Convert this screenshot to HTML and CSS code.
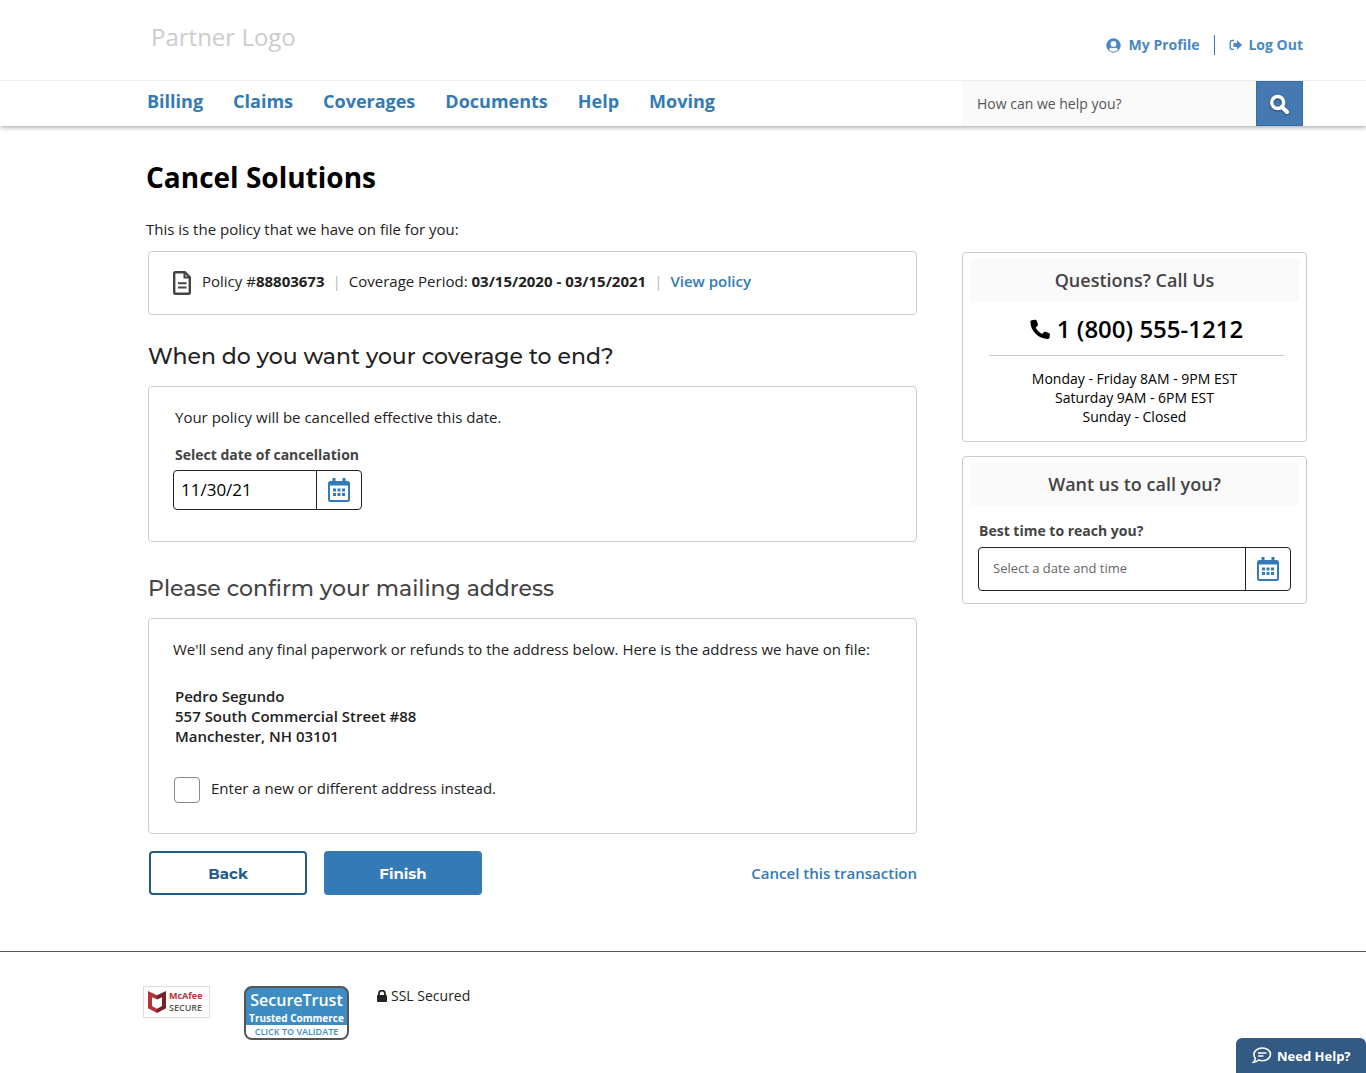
FILE: index.html
```html
<!DOCTYPE html>
<html lang="en">
<head>
    <meta charset="UTF-8">
    <meta name="viewport" content="width=device-width, initial-scale=1.0">
    <title>Cancel Solutions</title>
    <link rel="stylesheet" href="styles.css">
</head>
<body>
    <!-- Calendar icon shared by both date fields -->
    <svg class="sprite" width="0" height="0" aria-hidden="true">
        <symbol id="calendar" viewBox="0 0 22 24">
            <path fill-rule="evenodd" d="M4.500 0h3v3h7V0h3v3h2a2.500 2.500 0 0 1 2.500 2.500v16a2.500 2.500 0 0 1-2.500 2.500h-17A2.500 2.500 0 0 1 0 21.500v-16A2.500 2.500 0 0 1 2.500 3h2zM2 7.500v14.500h18V7.500z"/>
            <path d="M5 10.500h3v3H5zM9.500 10.500h3v3h-3zM14 10.500h3v3h-3zM5 15h3v3H5zM9.500 15h3v3h-3zM14 15h3v3h-3z"/>
        </symbol>
    </svg>

    <header class="header">
        <div class="topbar">
            <div class="logo">Partner Logo</div>
            <div class="account">
                <a href="#" class="profile">
                    <svg width="15" height="15" viewBox="0 0 15 15" aria-hidden="true">
                        <circle cx="7.500" cy="7.500" r="7.200" fill="currentColor"/>
                        <circle cx="7.500" cy="5.900" r="2.900" fill="#fff"/>
                        <path d="M2.900 11.700C3.700 10 5 9.700 5.700 9.700c1.200.6 2.400.6 3.600 0 .7 0 2 .3 2.800 2a6.300 6.300 0 0 1-9.200 0z" fill="#fff"/>
                    </svg>
                    My Profile
                </a>
                <a href="#" class="logout">
                    <svg width="14" height="12" viewBox="0 0 14 12" aria-hidden="true">
                        <path d="M5 1.500H3A1.800 1.800 0 0 0 1.200 3.200v5.400A1.800 1.800 0 0 0 3 10.400h2" fill="none" stroke="currentColor" stroke-width="1.400"/>
                        <path d="M4.500 4h3.400V1.200L13.200 6l-5.300 4.800V8H4.500z" fill="currentColor"/>
                    </svg>
                    Log Out
                </a>
            </div>
        </div>
        <div class="navbar">
            <nav class="nav">
                <a href="#">Billing</a>
                <a href="#">Claims</a>
                <a href="#">Coverages</a>
                <a href="#">Documents</a>
                <a href="#">Help</a>
                <a href="#">Moving</a>
            </nav>
            <form class="search">
                <input type="text" placeholder="How can we help you?" aria-label="Search">
                <button type="button" aria-label="Search">
                    <svg width="20" height="20" viewBox="0 0 20 20" aria-hidden="true">
                        <circle cx="7.700" cy="8.500" r="6" fill="none" stroke="#fff" stroke-width="3.400"/>
                        <path d="M12 13l5 5" stroke="#fff" stroke-width="4" stroke-linecap="round"/>
                    </svg>
                </button>
            </form>
        </div>
    </header>

    <main class="page">
        <h1>Cancel Solutions</h1>
        <p class="intro">This is the policy that we have on file for you:</p>

        <div class="columns">
            <div class="content">
                <section class="card policy">
                    <svg width="18" height="24" viewBox="0 0 18 24" aria-hidden="true">
                        <path d="M1.200 2.200a1 1 0 0 1 1-1h9.600l5 5v15.600a1 1 0 0 1-1 1H2.200a1 1 0 0 1-1-1z" fill="none" stroke="#444" stroke-width="2.400"/>
                        <path d="M11.500 1v5.500H17" fill="none" stroke="#444" stroke-width="2"/>
                        <path d="M5 12.300h8.500M5 16.500h8.500" stroke="#444" stroke-width="2"/>
                    </svg>
                    <div class="policy-info">
                        <span>Policy #<b>88803673</b></span>
                        <span class="divider">|</span>
                        <span>Coverage Period: <b>03/15/2020 - 03/15/2021</b></span>
                        <span class="divider">|</span>
                        <a href="#">View policy</a>
                    </div>
                </section>

                <h2>When do you want your coverage to end?</h2>
                <section class="card end-date">
                    <p>Your policy will be cancelled effective this date.</p>
                    <label for="cancelDate">Select date of cancellation</label>
                    <div class="date-field">
                        <input id="cancelDate" type="text" value="11/30/21">
                        <button type="button" aria-label="Open calendar"><svg width="22" height="24"><use href="#calendar"/></svg></button>
                    </div>
                </section>

                <h2 class="muted">Please confirm your mailing address</h2>
                <section class="card mailing">
                    <p>We'll send any final paperwork or refunds to the address below. Here is the address we have on file:</p>
                    <address>
                        Pedro Segundo<br>
                        557 South Commercial Street #88<br>
                        Manchester, NH 03101
                    </address>
                    <div class="check">
                        <input id="newAddress" type="checkbox">
                        <label for="newAddress">Enter a new or different address instead.</label>
                    </div>
                </section>

                <div class="actions">
                    <button type="button" class="btn btn-back">Back</button>
                    <button type="button" class="btn btn-finish">Finish</button>
                    <a href="#">Cancel this transaction</a>
                </div>
            </div>

            <aside class="sidebar">
                <section class="card call-us">
                    <h3>Questions? Call Us</h3>
                    <div class="phone">
                        <svg width="20" height="20" viewBox="0 0 20 20" aria-hidden="true">
                            <path d="M.4 2.800C.4 1.800 1 1.300 1.800 1.200L5 .8c.8-.1 1.400.3 1.700 1l1.200 3.300c.2.700 0 1.300-.5 1.800L5.700 8.500c1.200 2.700 3.600 5.100 6.400 6.400l1.700-1.700c.5-.5 1.100-.6 1.700-.4l3.300 1.200c.8.3 1.100.9 1.100 1.600l-.4 2.900c-.1.900-.7 1.400-1.600 1.400C8.400 19.900.5 12.300.4 2.800z"/>
                        </svg>
                        1 (800) 555-1212
                    </div>
                    <p class="hours">
                        Monday - Friday 8AM - 9PM EST<br>
                        Saturday 9AM - 6PM EST<br>
                        Sunday - Closed
                    </p>
                </section>

                <section class="card call-you">
                    <h3>Want us to call you?</h3>
                    <label for="callTime">Best time to reach you?</label>
                    <div class="date-field">
                        <input id="callTime" type="text" placeholder="Select a date and time">
                        <button type="button" aria-label="Open calendar"><svg width="22" height="24"><use href="#calendar"/></svg></button>
                    </div>
                </section>
            </aside>
        </div>
    </main>

    <footer class="footer">
        <a href="#" class="mcafee">
            <svg width="18" height="22" viewBox="0 0 18 22" aria-hidden="true">
                <path d="M0 0l9 4.200v4.300L4 6.200v8.900l5 2.600V22l-9-4.800z" fill="#b5333a"/>
                <path d="M18 0L9 4.200v4.300l5-2.300v8.900l-5 2.600V22l9-4.800z" fill="#6e2429"/>
            </svg>
            <span class="mcafee-text">
                <b>McAfee</b>
                <span>SECURE</span>
            </span>
        </a>
        <a href="#" class="securetrust">
            <span class="trust-name">SecureTrust</span>
            <span class="trust-type">Trusted Commerce</span>
            <span class="trust-click">CLICK TO VALIDATE</span>
        </a>
        <div class="ssl">
            <svg width="10" height="12" viewBox="0 0 10 12" aria-hidden="true">
                <path d="M2 6V3.600a3 3 0 0 1 6 0V6" fill="none" stroke="#222" stroke-width="1.800"/>
                <rect y="5" width="10" height="7" rx="1" fill="#222"/>
            </svg>
            SSL Secured
        </div>
    </footer>

    <button type="button" class="need-help">
        <svg width="20" height="17" viewBox="0 0 20 17" aria-hidden="true">
            <path d="M10.300 1c4.700 0 8.200 2.700 8.200 6.300s-3.500 6.400-8.200 6.400c-1.300 0-2.500-.2-3.600-.7-1.400 1.200-3 2.100-5.200 2.300 1-1.200 1.700-2.500 1.900-3.900A5.800 5.800 0 0 1 2 7.300C2 3.700 5.600 1 10.300 1z" fill="none" stroke="#fff" stroke-width="1.600"/>
            <path d="M6 6h8.500M6 9h5.500" stroke="#fff" stroke-width="1.500"/>
        </svg>
        Need Help?
    </button>
</body>
</html>
```
FILE: styles.css
```css
*, *::before, *::after {
    box-sizing: border-box;
}

body {
    margin: 0;
    font-family: "Open Sans", sans-serif;
    font-size: 15px;
    line-height: 20px;
    color: #222;
    background: #fff;
}

h1, h2, h3, p {
    margin: 0;
}

a {
    color: #337ab7;
    text-decoration: none;
}

input, button {
    font-family: inherit;
    margin: 0;
}

button {
    cursor: pointer;
}

b {
    font-weight: 700;
}

.sprite {
    position: absolute;
}

/* Header */
.header {
    box-shadow: 0 1px 5px rgba(0, 0, 0, 0.4);
}

.topbar {
    display: flex;
    justify-content: space-between;
    height: 81px;
    padding: 0 63px 0 151px;
    border-bottom: 1px solid #eee;
}

.logo {
    padding-top: 21px;
    font-size: 24px;
    line-height: 32px;
    color: #ccc;
}

.account {
    display: flex;
    align-items: center;
    padding-top: 10px;
}

.account a {
    display: flex;
    align-items: center;
    font-size: 14px;
    font-weight: 700;
    color: #4b87c2;
}

.profile {
    gap: 8px;
    padding-right: 15px;
    border-right: 1px solid #337ab7;
}

.logout {
    gap: 5px;
    padding-left: 14px;
}

.navbar {
    display: flex;
    justify-content: space-between;
    height: 45px;
    padding: 0 63px 0 147px;
}

.nav {
    display: flex;
    gap: 30px;
    padding-top: 7px;
}

.nav a {
    font-size: 18px;
    line-height: 26px;
    font-weight: 700;
}

.search {
    display: flex;
    width: 340px;
}

.search input {
    flex: 1;
    min-width: 0;
    padding: 0 14px;
    border: none;
    font-size: 14px;
    background: #fafafa;
}

.search input::placeholder {
    color: #555;
}

.search button {
    display: flex;
    align-items: center;
    justify-content: center;
    width: 47px;
    padding: 0;
    border: 1px solid #336ea8;
    background: #4679b2;
}

.search svg {
    filter: drop-shadow(0 1px 1px rgba(0, 0, 0, 0.4));
}

/* Page */
.page {
    padding: 31px 59px 56px 146px;
}

h1 {
    font-size: 28px;
    line-height: 40px;
    font-weight: 700;
    color: #000;
}

.intro {
    margin-top: 22px;
}

.columns {
    display: flex;
    gap: 45px;
    margin-top: 12px;
    padding-left: 2px;
}

.content {
    flex: 1;
    min-width: 0;
}

.card {
    border: 1px solid #ccc;
    border-radius: 4px;
}

h2 {
    margin: 27px 0 14px;
    font-family: Montserrat, Inter, sans-serif;
    font-size: 22px;
    line-height: 30px;
    font-weight: 500;
}

h2.muted {
    margin-top: 32px;
    color: #444;
}

.policy {
    display: flex;
    align-items: flex-start;
    gap: 11px;
    height: 64px;
    padding: 19px 24px 0;
}

.policy-info {
    display: flex;
    gap: 8px;
}

.policy a, .actions a {
    font-weight: 600;
}

.divider {
    color: #bbb;
}

.end-date {
    padding: 20px 24px 31px;
}

.end-date p, .end-date label {
    padding-left: 2px;
}

label {
    font-size: 14px;
}

.end-date label, .call-you label {
    display: block;
    font-weight: 700;
    color: #444;
}

.end-date label {
    margin-top: 18px;
}

.date-field {
    display: flex;
    height: 40px;
    border: 1px solid #222;
    border-radius: 4px;
}

.date-field input {
    flex: 1;
    min-width: 0;
    padding: 0 7px 2px;
    border: none;
    background: none;
    font-size: 17px;
    color: #000;
}

.date-field button {
    display: flex;
    align-items: center;
    justify-content: center;
    width: 45px;
    padding: 0;
    border: none;
    border-left: 1px solid #222;
    background: none;
}

.date-field svg {
    fill: #337ab7;
}

.end-date .date-field {
    width: 189px;
    margin-top: 5px;
}

.mailing {
    padding: 20px 24px 30px;
}

address {
    margin: 27px 0 31px;
    padding-left: 2px;
    font-style: normal;
    font-weight: 600;
}

.check {
    display: flex;
    gap: 11px;
}

.check input {
    appearance: none;
    width: 26px;
    height: 26px;
    margin-left: 1px;
    border: 1px solid #888;
    border-radius: 4px;
}

.check input:checked {
    background: #337ab7;
}

.check label {
    font-size: 15px;
    line-height: 22px;
}

.actions {
    display: flex;
    align-items: center;
    gap: 17px;
    margin-top: 17px;
    padding-left: 1px;
}

.btn {
    width: 158px;
    height: 44px;
    border: 2px solid #235a8c;
    border-radius: 4px;
    font-family: Montserrat, Inter, sans-serif;
    font-size: 15px;
    font-weight: 700;
}

.btn-back {
    color: #235a8c;
    background: #fff;
}

.btn-finish {
    border-color: #337ab7;
    color: #fff;
    background: #337ab7;
}

.actions a {
    margin-left: auto;
}

/* Sidebar */
.sidebar {
    width: 345px;
    padding-top: 1px;
}

h3 {
    border-radius: 4px;
    font-size: 18px;
    line-height: 43px;
    font-weight: 600;
    text-align: center;
    color: #444;
    background: #fafafa;
}

.call-us {
    padding: 6px 7px 15px;
}

.phone {
    display: flex;
    align-items: center;
    justify-content: center;
    gap: 7px;
    margin: 0 15px 0 19px;
    padding: 10px 0;
    border-bottom: 1px solid #ccc;
    font-size: 24px;
    line-height: 33px;
    font-weight: 600;
    color: #000;
}

.hours {
    margin-top: 13px;
    font-size: 14px;
    line-height: 19px;
    text-align: center;
    color: #000;
}

.call-you {
    margin-top: 14px;
    padding: 6px 7px 12px;
}

.call-you label {
    margin: 15px 9px 6px;
}

.call-you .date-field {
    height: 44px;
    margin: 0 8px;
}

.call-you input {
    padding: 0 14px 2px;
    font-size: 13px;
}

.call-you input::placeholder {
    color: #666;
}

/* Footer */
.footer {
    display: flex;
    align-items: flex-start;
    padding: 34px 59px 33px 143px;
    border-top: 1px solid #555;
}

.mcafee {
    display: flex;
    align-items: center;
    gap: 3px;
    width: 67px;
    height: 32px;
    padding-left: 4px;
    border: 1px solid #ddd;
    font-size: 9px;
    line-height: 12px;
    font-weight: 600;
    color: #555;
}

.mcafee-text {
    display: flex;
    flex-direction: column;
}

.mcafee b {
    color: #b5333a;
}

.securetrust {
    display: flex;
    flex-direction: column;
    width: 105px;
    height: 54px;
    margin: 0 28px 0 34px;
    border: 2px solid #555;
    border-radius: 8px;
    overflow: hidden;
    text-align: center;
    white-space: nowrap;
    color: #fff;
    background: #3d8dc4;
}

.trust-name {
    font-size: 16px;
    line-height: 24px;
    font-weight: 600;
}

.trust-type {
    font-size: 10px;
    line-height: 13px;
    font-weight: 700;
}

.trust-click {
    font-size: 9px;
    line-height: 13px;
    font-weight: 600;
    color: #3d8dc4;
    background: #fff;
}

.ssl {
    display: flex;
    align-items: center;
    gap: 4px;
    font-size: 14px;
}

.need-help {
    position: fixed;
    right: 0;
    bottom: 0;
    display: flex;
    align-items: center;
    gap: 5px;
    width: 130px;
    height: 35px;
    padding: 0 0 0 16px;
    border: none;
    border-radius: 6px 6px 0 0;
    font-size: 13px;
    font-weight: 700;
    color: #fff;
    background: #335a83;
}
```
